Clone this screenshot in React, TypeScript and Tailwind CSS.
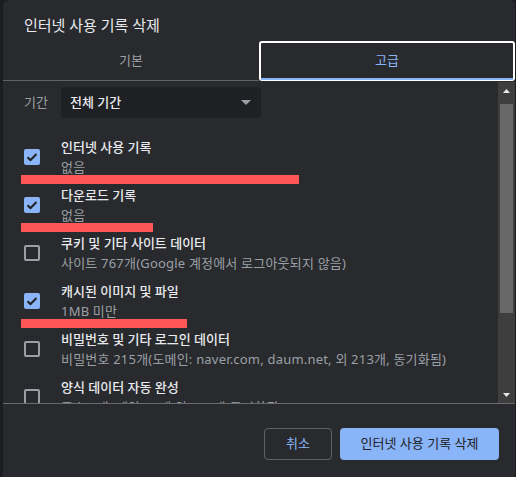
import { useState } from 'react';

type Item = { title: string; sub: string; checked: boolean; redact?: string };

const items: Item[] = [
  { title: '인터넷 사용 기록', sub: '없음', checked: true, redact: 'w-[278px]' },
  { title: '다운로드 기록', sub: '없음', checked: true, redact: 'w-[132px]' },
  { title: '쿠키 및 기타 사이트 데이터', sub: '사이트 767개(Google 계정에서 로그아웃되지 않음)', checked: false },
  { title: '캐시된 이미지 및 파일', sub: '1MB 미만', checked: true, redact: 'w-[166px]' },
  { title: '비밀번호 및 기타 로그인 데이터', sub: '비밀번호 215개(도메인: naver.com, daum.net, 외 213개, 동기화됨)', checked: false },
  { title: '양식 데이터 자동 완성', sub: '주소 1개, 제안 35개 외 100개(동기화됨)', checked: false },
];

function Checkbox({ checked, onClick }: { checked: boolean; onClick: () => void }) {
  return (
    <button
      onClick={onClick}
      className={
        checked
          ? 'w-4 h-4 rounded-[2px] bg-[#8ab4f8] flex items-center justify-center shrink-0'
          : 'w-4 h-4 rounded-[2px] border-2 border-[#9aa0a6] shrink-0'
      }
    >
      {checked && (
        <svg viewBox="0 0 16 16" className="w-4 h-4">
          <polyline points="3.5,8.2 6.5,11 12.5,5" fill="none" stroke="#202124" strokeWidth="2" />
        </svg>
      )}
    </button>
  );
}

export default function App() {
  const [checks, setChecks] = useState(items.map((i) => i.checked));
  const [tab, setTab] = useState(1);

  return (
    <div className="w-[516px] h-[477px] bg-[#1c1d20] flex font-['Noto_Sans','Noto_Sans_CJK_KR',sans-serif] overflow-hidden">
      <div className="ml-[3px] w-[512px] h-full bg-[#292a2d] rounded-t-[6px] flex flex-col">
        {/* Title */}
        <h1 className="pt-[15px] pl-[21px] text-[15px] leading-[20px] text-[#e8eaed] mb-[6px]">인터넷 사용 기록 삭제</h1>

        {/* Tabs */}
        <div className="flex h-[40px]">
          <button
            onClick={() => setTab(0)}
            className="w-[256px] h-full border-b border-[#5f6368] text-[13px] text-[#9aa0a6] flex items-center justify-center"
          >
            기본
          </button>
          <button
            onClick={() => setTab(1)}
            className="flex-1 h-full border-2 border-white rounded-[3px] flex flex-col text-[13px] text-[#8ab4f8]"
          >
            <span className="flex-1 flex items-center justify-center">고급</span>
            {tab === 1 && <span className="h-[2px] bg-[#8ab4f8] mb-[-1px]" />}
          </button>
        </div>

        {/* Scroll area */}
        <div className="flex h-[322px] mt-[1px] border-b border-[#6a6b6e]">
          <div className="flex-1 overflow-hidden pl-[21px] pt-[5px]">
            <div className="flex items-center h-[31px]">
              <span className="w-[37px] text-[13px] text-[#9aa0a6]">기간</span>
              <div className="w-[200px] h-full rounded-[4px] bg-[#1f2023] flex items-center justify-between pl-[9px] pr-[10px]">
                <span className="text-[13px] font-medium text-[#e8eaed]">전체 기간</span>
                <svg viewBox="0 0 10 5" className="w-[10px] h-[5px]">
                  <polygon points="0,0 10,0 5,5" fill="#9aa0a6" />
                </svg>
              </div>
            </div>

            <div className="mt-[19px] flex flex-col gap-[8px]">
              {items.map((it, i) => (
                <div key={it.title} className="relative flex items-center h-[40px]">
                  <div className="w-[37px] flex">
                    <Checkbox
                      checked={checks[i]}
                      onClick={() => setChecks((c) => c.map((v, j) => (j === i ? !v : v)))}
                    />
                  </div>
                  <div className="flex flex-col">
                    <span className="text-[13px] leading-[20px] font-medium text-[#e8eaed]">{it.title}</span>
                    <span className="text-[13px] leading-[20px] text-[#9aa0a6] whitespace-nowrap tracking-[0.2px]">{it.sub}</span>
                  </div>
                  {it.redact && (
                    <span className={`absolute block left-[-3px] top-[38px] h-[9px] bg-[#ff5757] ${it.redact}`} />
                  )}
                </div>
              ))}
            </div>
          </div>

          {/* Scrollbar */}
          <div className="w-[17px] bg-[#3e3e3e] flex flex-col items-center">
            <div className="h-[17px] flex items-center justify-center">
              <svg viewBox="0 0 7 4" className="w-[7px] h-[4px]">
                <polygon points="3.5,0 7,4 0,4" fill="#e8e8e8" />
              </svg>
            </div>
            <div className="mt-[5px] w-[13px] h-[209px] bg-[#686868]" />
            <div className="flex-1" />
            <div className="h-[17px] flex items-center justify-center">
              <svg viewBox="0 0 7 4" className="w-[7px] h-[4px]">
                <polygon points="0,0 7,0 3.5,4" fill="#e8e8e8" />
              </svg>
            </div>
          </div>
        </div>

        {/* Footer */}
        <div className="flex justify-end gap-2 pt-[24px] pr-[16px]">
          <button className="w-[68px] h-[32px] rounded-[4px] border border-[#5f6368] text-[13px] text-[#8ab4f8]">취소</button>
          <button className="w-[159px] h-[32px] rounded-[4px] bg-[#8ab4f8] text-[13px] text-[#202124]">인터넷 사용 기록 삭제</button>
        </div>
      </div>
    </div>
  );
}
